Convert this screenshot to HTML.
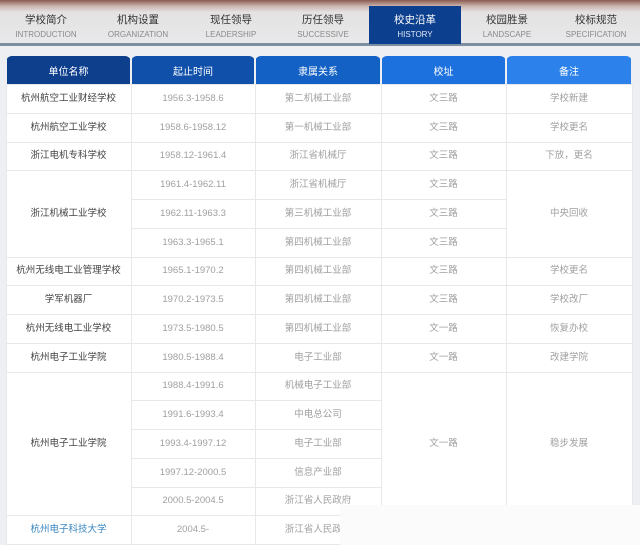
<!DOCTYPE html><html><head><meta charset="utf-8"><style>
body{margin:0;width:640px;height:542px;overflow:hidden;background:#eeeff2;font-family:"Liberation Sans","Noto Sans CJK SC",sans-serif;position:relative}
.top{position:absolute;left:0;top:0;width:640px;height:44px;background:linear-gradient(#8a5a50 0,#c9b4ac 6px,#e4e2e2 12px,#e8e9eb 44px)}
.line{position:absolute;left:0;top:43px;width:640px;height:3px;background:#7d8ea0}
.tab{position:absolute;top:6px;width:92px;height:38px;text-align:center;font-size:10px;color:#333}
.tab b{display:block;font-weight:normal;margin-top:6px;font-size:10.5px}
.tab i{display:block;font-style:normal;font-size:8px;color:#8a8a8a;margin-top:3px}
.tab.act{background:#0c3f8e;color:#fff}.tab.act i{color:#dfe6f3}
table{position:absolute;left:5px;top:56px;border-collapse:collapse;table-layout:fixed;width:626px}
th{height:28px;color:#fff;font-weight:normal;font-size:10px;border-radius:6px 6px 0 0;border-left:2px solid #eeeff2;border-right:2px solid #eeeff2;padding:0}
td{height:27.75px;padding:0;border:1px solid #e8e8e8;background:#fff;text-align:center;font-size:9.5px;color:#a0a0a0;line-height:12px;vertical-align:middle}
td.n{color:#444}
</style></head><body>
<div class="top"></div><div class="line"></div>
<div class="tab" style="left:0"><b>学校简介</b><i>INTRODUCTION</i></div>
<div class="tab" style="left:92px"><b>机构设置</b><i>ORGANIZATION</i></div>
<div class="tab" style="left:185px"><b>现任领导</b><i>LEADERSHIP</i></div>
<div class="tab" style="left:277px"><b>历任领导</b><i>SUCCESSIVE</i></div>
<div class="tab act" style="left:369px"><b>校史沿革</b><i>HISTORY</i></div>
<div class="tab" style="left:461px"><b>校园胜景</b><i>LANDSCAPE</i></div>
<div class="tab" style="left:550px"><b>校标规范</b><i>SPECIFICATION</i></div>
<table>
<colgroup><col style="width:125px"><col style="width:124px"><col style="width:126px"><col style="width:125px"><col style="width:126px"></colgroup>
<tr><th style="background:#0d3f8d">单位名称</th><th style="background:#1050aa">起止时间</th><th style="background:#1461c6">隶属关系</th><th style="background:#1d71de">校址</th><th style="background:#2c82ea">备注</th></tr>
<tr><td class="n">杭州航空工业财经学校</td><td>1956.3-1958.6</td><td>第二机械工业部</td><td>文三路</td><td>学校新建</td></tr>
<tr><td class="n">杭州航空工业学校</td><td>1958.6-1958.12</td><td>第一机械工业部</td><td>文三路</td><td>学校更名</td></tr>
<tr><td class="n">浙江电机专科学校</td><td>1958.12-1961.4</td><td>浙江省机械厅</td><td>文三路</td><td>下放，更名</td></tr>
<tr><td class="n" rowspan="3">浙江机械工业学校</td><td>1961.4-1962.11</td><td>浙江省机械厅</td><td>文三路</td><td rowspan="3">中央回收</td></tr>
<tr><td>1962.11-1963.3</td><td>第三机械工业部</td><td>文三路</td></tr>
<tr><td>1963.3-1965.1</td><td>第四机械工业部</td><td>文三路</td></tr>
<tr><td class="n">杭州无线电工业管理学校</td><td>1965.1-1970.2</td><td>第四机械工业部</td><td>文三路</td><td>学校更名</td></tr>
<tr><td class="n">学军机器厂</td><td>1970.2-1973.5</td><td>第四机械工业部</td><td>文三路</td><td>学校改厂</td></tr>
<tr><td class="n">杭州无线电工业学校</td><td>1973.5-1980.5</td><td>第四机械工业部</td><td>文一路</td><td>恢复办校</td></tr>
<tr><td class="n">杭州电子工业学院</td><td>1980.5-1988.4</td><td>电子工业部</td><td>文一路</td><td>改建学院</td></tr>
<tr><td class="n" rowspan="5">杭州电子工业学院</td><td>1988.4-1991.6</td><td>机械电子工业部</td><td rowspan="5">文一路</td><td rowspan="5">稳步发展</td></tr>
<tr><td>1991.6-1993.4</td><td>中电总公司</td></tr>
<tr><td>1993.4-1997.12</td><td>电子工业部</td></tr>
<tr><td>1997.12-2000.5</td><td>信息产业部</td></tr>
<tr><td>2000.5-2004.5</td><td>浙江省人民政府</td></tr>
<tr><td class="n" style="color:#3a86c0">杭州电子科技大学</td><td>2004.5-</td><td>浙江省人民政府</td><td style="text-align:left;padding-left:24px">下</td><td></td></tr>
</table>
<div style="position:absolute;left:340px;top:505px;width:300px;height:40px;background:#fbfbfb"></div>
</body></html>
